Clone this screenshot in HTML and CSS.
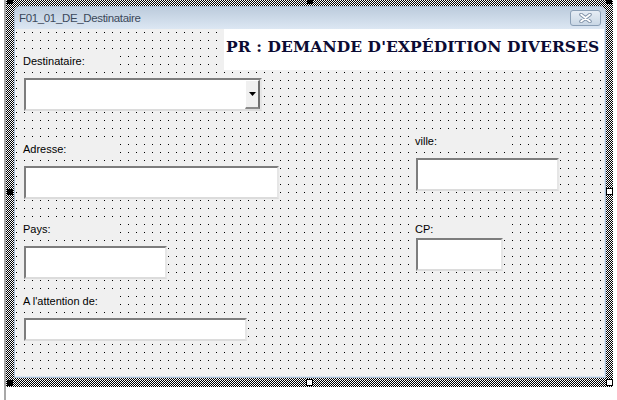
FILE: index.html
```html
<!DOCTYPE html>
<html lang="fr">
<head>
<meta charset="utf-8">
<title>F01_01_DE_Destinataire</title>
<link rel="stylesheet" href="styles.css">
</head>
<body>
<div class="page">
  <div class="sel">
    <span class="handle h-tl"></span>
    <span class="handle h-tm"></span>
    <span class="handle h-tr"></span>
    <span class="handle h-ml"></span>
    <span class="handle hollow h-mr"></span>
    <span class="handle h-bl"></span>
    <span class="handle hollow h-bm"></span>
    <span class="handle hollow h-br"></span>
    <div class="form">
      <div class="titlebar">
        <span class="title">F01_01_DE_Destinataire</span>
        <span class="close">
          <svg width="13" height="10" viewBox="0 0 13 10">
            <path d="M2 1.5 L11 8.5 M11 1.5 L2 8.5" stroke="#8395ab" stroke-width="3.6" stroke-linecap="round"/>
            <path d="M2 1.5 L11 8.5 M11 1.5 L2 8.5" stroke="#ffffff" stroke-width="1.6" stroke-linecap="round"/>
          </svg>
        </span>
      </div>
      <div class="client">
        <div class="layer left">
          <div class="lbl lbl-dest">Destinataire:</div>
          <div class="field combo">
            <div class="combo-btn">
              <svg width="7" height="4" viewBox="0 0 7 4"><polygon points="0,0 7,0 3.5,4" fill="#000"/></svg>
            </div>
          </div>
          <div class="lbl lbl-adr">Adresse:</div>
          <div class="field f-adr"></div>
          <div class="lbl lbl-pays">Pays:</div>
          <div class="field f-pays"></div>
          <div class="lbl lbl-att">A l'attention de:</div>
          <div class="field f-att"></div>
        </div>
        <div class="layer right">
          <div class="heading">PR : DEMANDE D'EXPÉDITION DIVERSES</div>
          <div class="col">
            <div class="lbl lbl-ville">ville:</div>
            <div class="field f-ville"></div>
            <div class="lbl lbl-cp">CP:</div>
            <div class="field f-cp"></div>
          </div>
        </div>
      </div>
    </div>
  </div>
</div>
</body>
</html>
```
FILE: styles.css
```css
* { box-sizing: border-box; }

body {
  margin: 0;
  background: #ffffff;
  font-family: "Liberation Sans", Arial, sans-serif;
  overflow: hidden;
}

.page {
  margin-left: 4px;
  border-left: 2px solid #a8a8a8;
  height: 400px;
}

.sel {
  position: relative;
  width: 607px;
  height: 387px;
  padding: 6px 7px 9px 8px;
  background: repeating-conic-gradient(#000 0 25%, #fff 0 50%) 0 0 / 2px 2px;
}

.handle {
  position: absolute;
  width: 6px;
  height: 6px;
  background: #000;
}
.handle.hollow {
  width: 7px;
  height: 7px;
  background: #fff;
  border: 1px solid #000;
}
.h-tl { left: 1px; top: -2px; }
.h-tm { left: 301px; top: -2px; }
.h-tr { left: 600px; top: -2px; }
.h-ml { left: 1px; top: 189px; }
.h-mr { left: 600px; top: 188px; }
.h-bl { left: 1px; top: 380px; }
.h-bm { left: 300px; top: 379px; }
.h-br { left: 600px; top: 379px; }

.form {
  width: 592px;
  height: 372px;
  border: 1px solid #a9bed5;
  border-radius: 6px 6px 0 0;
  display: flex;
  flex-direction: column;
  background: #f0f0f0;
  overflow: hidden;
}

.titlebar {
  height: 22px;
  flex: none;
  background: linear-gradient(#bccbdc, #dce7f3);
  display: flex;
  align-items: center;
  justify-content: space-between;
  padding: 0 4px 0 4px;
}

.title {
  font-size: 11.5px;
  letter-spacing: -0.35px;
  color: #3a485a;
  line-height: 14px;
}

.close {
  width: 31px;
  height: 16px;
  border: 1px solid #8a9fb6;
  border-radius: 3px;
  background: linear-gradient(#e6edf5, #c9d7e5);
  display: flex;
  align-items: center;
  justify-content: center;
}
.close svg { display: block; }

.client {
  flex: 1;
  display: grid;
  background-color: #f0f0f0;
  background-image: conic-gradient(from 270deg at 1px 1px, #000 90deg, transparent 0);
  background-size: 8px 8px;
  background-position: 1px 3px;
  border-right: 1px solid #dae5f0;
  border-bottom: 1px solid #dae5f0;
}

.layer {
  grid-area: 1 / 1;
  display: flex;
  flex-direction: column;
  align-items: flex-start;
}

.left { padding-left: 9px; }
.right { padding-left: 209px; }

.lbl {
  margin-left: -4px;
  padding: 6px 3px 1px;
  width: 96px;
  height: 20px;
  font-size: 11px;
  line-height: 13px;
  color: #000;
  background: #f0f0f0;
  white-space: nowrap;
}

.field {
  background: #fff;
  border-style: solid;
  border-width: 2px;
  border-color: #7d7d7d #e6e6e6 #dcdcdc #7d7d7d;
  height: 33px;
}

.lbl-dest { margin-top: 20px; }
.combo {
  margin-top: 9px;
  width: 238px;
  display: flex;
  justify-content: flex-end;
}
.combo-btn {
  width: 15px;
  height: 100%;
  background: #f0f0f0;
  border-left: 1px solid #fff;
  border-top: 1px solid #fff;
  border-right: 2px solid #6f6f6f;
  border-bottom: 2px solid #8a8a8a;
  display: flex;
  align-items: center;
  justify-content: center;
}
.combo-btn svg { display: block; }

.lbl-adr { margin-top: 26px; }
.f-adr { margin-top: 9px; width: 255px; }
.lbl-pays { margin-top: 18px; }
.f-pays { margin-top: 9px; width: 143px; }
.lbl-att { margin-top: 10px; }
.f-att { margin-top: 9px; width: 223px; height: 23px; }

.heading {
  width: 380px;
  height: 41px;
  background: #fff;
  padding: 8px 0 0 2px;
  font-family: "DejaVu Serif", "Liberation Serif", serif;
  font-weight: bold;
  font-size: 15.5px;
  letter-spacing: 0.1px;
  line-height: 20px;
  color: #0b0b33;
  white-space: nowrap;
}

.col {
  margin-left: 192px;
  display: flex;
  flex-direction: column;
  align-items: flex-start;
}
.lbl-ville { margin-top: 59px; }
.f-ville { margin-top: 9px; width: 143px; }
.lbl-cp { margin-top: 26px; }
.f-cp { margin-top: 1px; width: 87px; }
```
